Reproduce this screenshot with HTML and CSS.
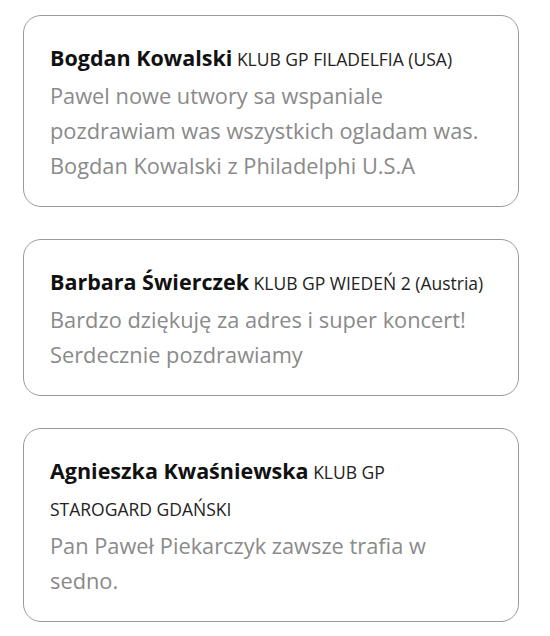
FILE: index.html
```html
<!DOCTYPE html>
<html lang="pl">
<head>
<meta charset="utf-8">
<link rel="stylesheet" href="styles.css">
</head>
<body>
<div class="list">
  <div class="card">
    <div class="head"><span class="name">Bogdan Kowalski</span> <span class="club">KLUB GP FILADELFIA (USA)</span></div>
    <div class="msg">Pawel nowe utwory sa wspaniale pozdrawiam was wszystkich ogladam was. Bogdan Kowalski z Philadelphi U.S.A</div>
  </div>
  <div class="card">
    <div class="head"><span class="name">Barbara Świerczek</span> <span class="club">KLUB GP WIEDEŃ 2 (Austria)</span></div>
    <div class="msg">Bardzo dziękuję za adres i super koncert! Serdecznie pozdrawiamy</div>
  </div>
  <div class="card">
    <div class="head"><span class="name">Agnieszka Kwaśniewska</span> <span class="club">KLUB GP STAROGARD GDAŃSKI</span></div>
    <div class="msg">Pan Paweł Piekarczyk zawsze trafia w sedno.</div>
  </div>
</div>
</body>
</html>
```
FILE: styles.css
```css
html, body {
  margin: 0;
  padding: 0;
  background: #ffffff;
}
body {
  font-family: "Open Sans", sans-serif;
}
.list {
  display: flex;
  flex-direction: column;
  gap: 32px;
  padding: 15px 0 0 23px;
  width: 496px;
}
.card {
  border: 1px solid #9a9a9a;
  border-radius: 18px;
  padding: 25px 31px 23px 26px;
}
.head {
  font-size: 17.5px;
  line-height: 37px;
}
.name {
  font-weight: 700;
  font-size: 21.5px;
  line-height: 1;
  color: #111;
}
.club {
  font-size: 17.5px;
  line-height: 1;
  color: #222;
}
.msg {
  font-size: 21.8px;
  line-height: 35px;
  color: #8a8a8a;
}
```
